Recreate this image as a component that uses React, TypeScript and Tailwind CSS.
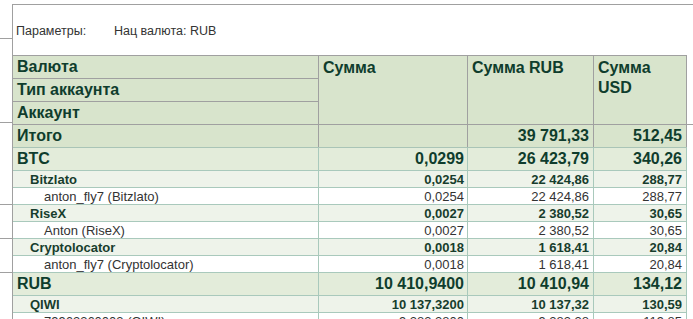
import React from "react";

type Row = {
  level: 0 | 1 | 2 | 3;
  label: string;
  amount: string;
  rub: string;
  usd: string;
};

const rows: Row[] = [
  { level: 0, label: "Итого", amount: "", rub: "39 791,33", usd: "512,45" },
  { level: 1, label: "BTC", amount: "0,0299", rub: "26 423,79", usd: "340,26" },
  { level: 2, label: "Bitzlato", amount: "0,0254", rub: "22 424,86", usd: "288,77" },
  { level: 3, label: "anton_fly7 (Bitzlato)", amount: "0,0254", rub: "22 424,86", usd: "288,77" },
  { level: 2, label: "RiseX", amount: "0,0027", rub: "2 380,52", usd: "30,65" },
  { level: 3, label: "Anton (RiseX)", amount: "0,0027", rub: "2 380,52", usd: "30,65" },
  { level: 2, label: "Cryptolocator", amount: "0,0018", rub: "1 618,41", usd: "20,84" },
  { level: 3, label: "anton_fly7 (Cryptolocator)", amount: "0,0018", rub: "1 618,41", usd: "20,84" },
  { level: 1, label: "RUB", amount: "10 410,9400", rub: "10 410,94", usd: "134,12" },
  { level: 2, label: "QIWI", amount: "10 137,3200", rub: "10 137,32", usd: "130,59" },
  { level: 3, label: "79963360003 (QIWI)", amount: "9 283,3800", rub: "9 283,38", usd: "119,85" },
];

// row look per level
const rowStyle = {
  0: "h-[23px] bg-[#d8e4cc] text-[16px] font-bold text-[#0f3d2d] border-[#a9c4b6]",
  1: "h-[23px] bg-[#e3ecda] text-[16px] font-bold text-[#0f3d2d] border-[#a9c9bc]",
  2: "h-[17px] bg-[#eef3ea] text-[13px] font-bold text-[#173d2d] border-[#a9c9bc]",
  3: "h-[17px] bg-white text-[13px] text-[#333333] border-[#a9c9bc]",
};

const labelPad = {
  0: "pl-[4px]",
  1: "pl-[4px]",
  2: "pl-[17px]",
  3: "pl-[31px]",
};

const sepColor = {
  0: "border-[#a0a0a0]",
  1: "border-[#a9c9bc]",
  2: "border-[#a9c9bc]",
  3: "border-[#a9c9bc]",
};

function BodyRow({ row }: { row: Row }) {
  const sep = sepColor[row.level];
  return (
    <div className={`flex shrink-0 border-b leading-none ${rowStyle[row.level]}`}>
      <div className={`w-[306px] shrink-0 flex items-center border-r whitespace-nowrap ${sep} ${labelPad[row.level]}`}>
        {row.label}
      </div>
      <div className={`w-[149px] shrink-0 flex items-center justify-end border-r pr-[3px] ${sep}`}>
        {row.amount}
      </div>
      <div className={`w-[126px] shrink-0 flex items-center justify-end border-r pr-[4px] ${sep}`}>
        {row.rub}
      </div>
      <div className={`w-[93px] shrink-0 flex items-center justify-end border-r pr-[4px] ${sep}`}>
        {row.usd}
      </div>
    </div>
  );
}

export default function App() {
  return (
    <div className="w-[693px] h-[319px] overflow-hidden bg-white flex font-['Liberation_Sans',Arial,sans-serif]">
      {/* left pane stub */}
      <div className="w-[12px] shrink-0 flex flex-col">
        <div className="h-[39px] shrink-0 border-b border-[#a0a0a0]"></div>
        <div className="h-[84px] shrink-0 border-b border-[#a0a0a0]"></div>
        <div className="h-[82px] shrink-0 border-b border-[#a0a0a0]"></div>
        <div className="h-[34px] shrink-0 border-b border-[#a0a0a0]"></div>
        <div className="h-[34px] shrink-0 border-b border-[#a0a0a0]"></div>
      </div>

      {/* report */}
      <div className="flex-1 mt-[4px] border-l border-t border-[#a0a0a0] flex flex-col">
        {/* Parameters */}
        <div className="h-[50px] shrink-0 pl-[3px] pt-[19px] text-[12.5px] leading-[15px] text-[#333333] flex">
          <span className="w-[98px]">Параметры:</span>
          <span>Нац валюта: RUB</span>
        </div>

        <div className="flex shrink-0">
          <div className="w-[674px] shrink-0">
            {/* Header */}
            <div className="flex border-t border-b border-[#a0a0a0] bg-[#d8e4cc] text-[16px] font-bold text-[#0f3d2d]">
              <div className="w-[306px] shrink-0 border-r border-[#a0a0a0] flex flex-col">
                <div className="h-[23px] border-b border-[#a0a0a0] pl-[4px] flex items-center leading-none">
                  Валюта
                </div>
                <div className="h-[23px] border-b border-[#a0a0a0] pl-[4px] flex items-center leading-none">
                  Тип аккаунта
                </div>
                <div className="h-[22px] pl-[4px] flex items-center leading-none">
                  Аккаунт
                </div>
              </div>
              <div className="w-[149px] shrink-0 border-r border-[#a0a0a0] pl-[4px] pt-[2px] leading-[20px]">
                Сумма
              </div>
              <div className="w-[126px] shrink-0 border-r border-[#a0a0a0] pl-[4px] pt-[2px] leading-[20px]">
                Сумма RUB
              </div>
              <div className="w-[93px] shrink-0 border-r border-[#a0a0a0] pl-[4px] pt-[2px] leading-[20px]">
                Сумма USD
              </div>
            </div>

            {/* Body */}
            {rows.map((row, i) => (
              <BodyRow key={i} row={row} />
            ))}
          </div>

          {/* right stub */}
          <div className="flex-1">
            <div className="h-[70px] border-b border-[#a0a0a0]"></div>
          </div>
        </div>
      </div>
    </div>
  );
}
